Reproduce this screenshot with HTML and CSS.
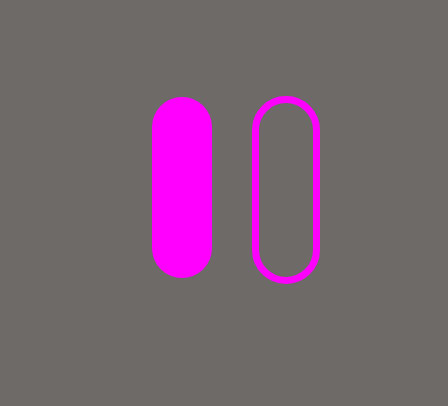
FILE: index.html
```html
<!DOCTYPE html>
<html>
<head>
<meta charset="utf-8">
<link rel="stylesheet" href="styles.css">
</head>
<body>
<div class="stage">
  <div class="pill filled"></div>
  <div class="pill outlined"></div>
</div>
</body>
</html>
```
FILE: styles.css
```css
html, body {
  margin: 0;
  padding: 0;
  background: #6e6a68;
  width: 448px;
  height: 406px;
  overflow: hidden;
}
.stage {
  display: flex;
  align-items: flex-start;
  gap: 40px;
  padding: 96px 0 0 152px;
}
.pill {
  box-sizing: border-box;
}
.filled {
  margin-top: 1px;
  width: 60px;
  height: 181px;
  border-radius: 30px;
  background: #ff00ff;
}
.outlined {
  width: 68px;
  height: 188px;
  border-radius: 34px;
  border: 7px solid #ff00ff;
}
```
